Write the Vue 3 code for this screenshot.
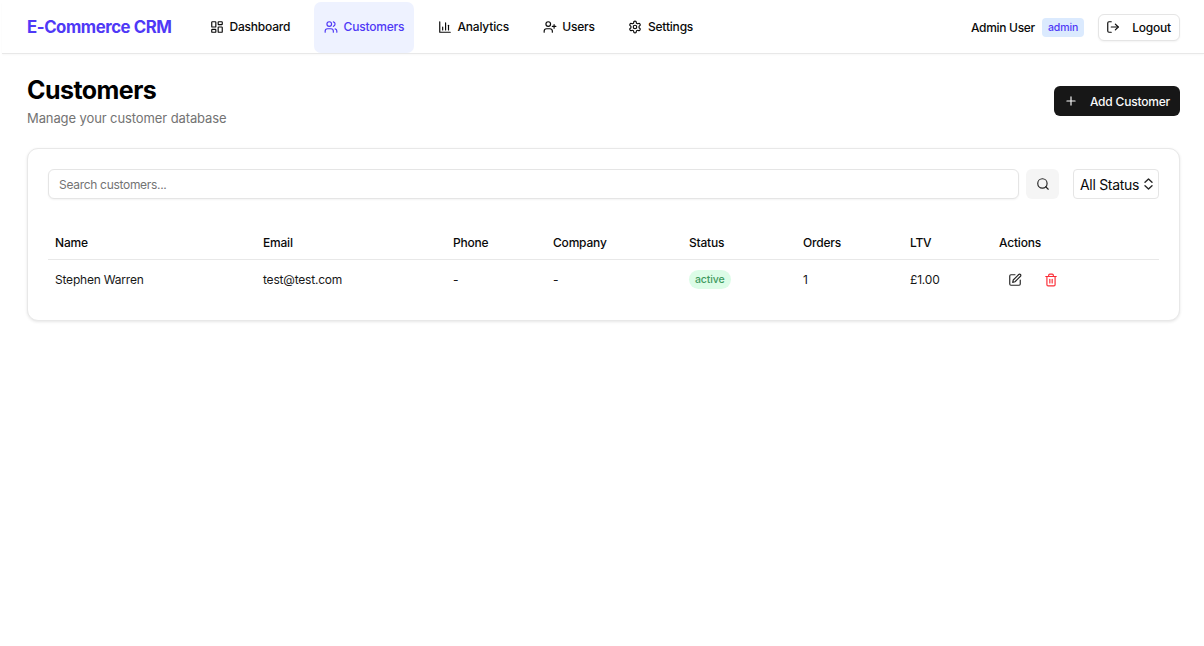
<script setup>
const columns = ['Name', 'Email', 'Phone', 'Company', 'Status', 'Orders', 'LTV', 'Actions']
</script>

<template>
  <div class="app">
    <nav class="nav">
      <div class="logo">E-Commerce CRM</div>
      <div class="links">
        <a class="link">
          <svg class="ic" viewBox="0 0 24 24"><rect x="3" y="3" width="7" height="9" rx="1"/><rect x="14" y="3" width="7" height="5" rx="1"/><rect x="14" y="12" width="7" height="9" rx="1"/><rect x="3" y="16" width="7" height="5" rx="1"/></svg>
          Dashboard
        </a>
        <a class="link active">
          <svg class="ic" viewBox="0 0 24 24"><path d="M16 21v-2a4 4 0 0 0-4-4H6a4 4 0 0 0-4 4v2"/><circle cx="9" cy="7" r="4"/><path d="M22 21v-2a4 4 0 0 0-3-3.87"/><path d="M16 3.13a4 4 0 0 1 0 7.75"/></svg>
          Customers
        </a>
        <a class="link">
          <svg class="ic" viewBox="0 0 24 24"><path d="M3 3v18h18"/><path d="M8 17v-5"/><path d="M13 17V5"/><path d="M18 17V9"/></svg>
          Analytics
        </a>
        <a class="link">
          <svg class="ic" viewBox="0 0 24 24"><path d="M16 21v-2a4 4 0 0 0-4-4H6a4 4 0 0 0-4 4v2"/><circle cx="9" cy="7" r="4"/><path d="M19 8v6"/><path d="M22 11h-6"/></svg>
          Users
        </a>
        <a class="link">
          <svg class="ic" viewBox="0 0 24 24"><path d="M12.22 2h-.44a2 2 0 0 0-2 2v.18a2 2 0 0 1-1 1.73l-.43.25a2 2 0 0 1-2 0l-.15-.08a2 2 0 0 0-2.73.73l-.22.38a2 2 0 0 0 .73 2.73l.15.1a2 2 0 0 1 1 1.72v.51a2 2 0 0 1-1 1.74l-.15.09a2 2 0 0 0-.73 2.73l.22.38a2 2 0 0 0 2.73.73l.15-.08a2 2 0 0 1 2 0l.43.25a2 2 0 0 1 1 1.73V20a2 2 0 0 0 2 2h.44a2 2 0 0 0 2-2v-.18a2 2 0 0 1 1-1.73l.43-.25a2 2 0 0 1 2 0l.15.08a2 2 0 0 0 2.73-.73l.22-.39a2 2 0 0 0-.73-2.73l-.15-.08a2 2 0 0 1-1-1.74v-.5a2 2 0 0 1 1-1.74l.15-.09a2 2 0 0 0 .73-2.73l-.22-.38a2 2 0 0 0-2.73-.73l-.15.08a2 2 0 0 1-2 0l-.43-.25a2 2 0 0 1-1-1.73V4a2 2 0 0 0-2-2z"/><circle cx="12" cy="12" r="3"/></svg>
          Settings
        </a>
      </div>
      <div class="user">
        <span class="uname">Admin User</span>
        <span class="role">admin</span>
        <button class="logout">
          <svg class="ic" viewBox="0 0 24 24"><path d="M9 21H5a2 2 0 0 1-2-2V5a2 2 0 0 1 2-2h4"/><path d="m16 17 5-5-5-5"/><path d="M21 12H9"/></svg>
          Logout
        </button>
      </div>
    </nav>

    <main class="main">
      <header class="head">
        <div>
          <h1>Customers</h1>
          <p>Manage your customer database</p>
        </div>
        <button class="add">
          <svg class="ic" viewBox="0 0 24 24"><path d="M5 12h14"/><path d="M12 5v14"/></svg>
          Add Customer
        </button>
      </header>

      <section class="card">
        <div class="filters">
          <input class="search" type="text" placeholder="Search customers..." />
          <button class="sbtn">
            <svg class="ic" viewBox="0 0 24 24"><circle cx="11" cy="11" r="8"/><path d="m21 21-4.3-4.3"/></svg>
          </button>
          <div class="select">
            All Status
            <svg class="chev" viewBox="0 0 9 12"><path d="M1 4.2 4.5 1 8 4.2"/><path d="M1 7.8 4.5 11 8 7.8"/></svg>
          </div>
        </div>

        <table>
          <thead>
            <tr><th v-for="c in columns" :key="c" :class="'c-' + c.toLowerCase()">{{ c }}</th></tr>
          </thead>
          <tbody>
            <tr>
              <td>Stephen Warren</td>
              <td>test@test.com</td>
              <td>-</td>
              <td>-</td>
              <td><span class="badge">active</span></td>
              <td>1</td>
              <td>£1.00</td>
              <td>
                <div class="actions">
                  <svg class="ic edit" viewBox="0 0 24 24"><path d="M12 3H5a2 2 0 0 0-2 2v14a2 2 0 0 0 2 2h14a2 2 0 0 0 2-2v-7"/><path d="M18.375 2.625a2.121 2.121 0 1 1 3 3L12 15l-4 1 1-4Z"/></svg>
                  <svg class="ic trash" viewBox="0 0 24 24"><path d="M3 6h18"/><path d="M19 6v14a2 2 0 0 1-2 2H7a2 2 0 0 1-2-2V6"/><path d="M8 6V4a2 2 0 0 1 2-2h4a2 2 0 0 1 2 2v2"/><path d="M10 11v6"/><path d="M14 11v6"/></svg>
                </div>
              </td>
            </tr>
          </tbody>
        </table>
      </section>
    </main>
  </div>
</template>

<style>
html, body { margin: 0; background: #fff; }
</style>

<style scoped>
.app {
  width: 1204px;
  height: 646px;
  box-sizing: border-box;
  padding: 2px 0 0 2px;
  font-family: Inter, "Liberation Sans", sans-serif;
  font-size: 12px;
  letter-spacing: -0.2px;
  color: #0a0a0a;
  background: #fff;
  overflow: hidden;
}
.ic {
  width: 14px;
  height: 14px;
  flex: none;
  fill: none;
  stroke: currentColor;
  stroke-width: 2;
  stroke-linecap: round;
  stroke-linejoin: round;
}
.nav {
  display: flex;
  align-items: center;
  height: 51px;
  padding: 0 24px 0 25px;
  border-bottom: 1px solid #e8e8e8;
  box-shadow: 0 1px 2px rgba(0, 0, 0, 0.03);
}
.logo {
  width: 145px;
  margin-bottom: 2px;
  font-size: 16.8px;
  font-weight: 700;
  letter-spacing: -0.45px;
  color: #4f39f6;
  white-space: nowrap;
}
.links {
  display: flex;
  align-self: stretch;
  margin-left: 28px;
  gap: 13.75px;
}
.link {
  display: flex;
  align-items: center;
  gap: 5.5px;
  padding: 0 10px 2px;
  font-weight: 500;
  white-space: nowrap;
  border-radius: 7px;
}
.link.active {
  background: #eef2ff;
  color: #4f39f6;
}
.user {
  display: flex;
  align-items: center;
  margin-left: auto;
  margin-bottom: 1px;
}
.uname {
  font-weight: 500;
  letter-spacing: -0.3px;
}
.role {
  margin-left: 7px;
  padding: 3px 6px;
  border-radius: 4px;
  background: #dbeafe;
  color: #4f39f6;
  font-size: 10.5px;
  letter-spacing: -0.1px;
  font-weight: 500;
  line-height: 13px;
}
.logout {
  display: flex;
  align-items: center;
  gap: 12px;
  box-sizing: border-box;
  height: 27px;
  margin-left: 14px;
  padding: 0 8px 0 7px;
  background: #fff;
  border: 1px solid #e5e5e5;
  border-radius: 6px;
  box-shadow: 0 1px 2px rgba(0, 0, 0, 0.05);
  font: 500 12px Inter, "Liberation Sans", sans-serif;
  letter-spacing: -0.2px;
  color: #0a0a0a;
}
.main {
  padding: 20px 24px 0 25px;
}
.head {
  display: flex;
  align-items: center;
  justify-content: space-between;
}
h1 {
  margin: 0;
  font-size: 25px;
  line-height: 32px;
  font-weight: 700;
  letter-spacing: -0.55px;
  color: #000;
}
p {
  margin: 2px 0 0;
  font-size: 13px;
  line-height: 20px;
  letter-spacing: -0.1px;
  color: #737373;
}
.add {
  display: flex;
  align-items: center;
  gap: 12px;
  box-sizing: border-box;
  height: 30px;
  padding: 0 10px;
  background: #171717;
  border: 0;
  border-radius: 6px;
  color: #fafafa;
  font: 500 12px Inter, "Liberation Sans", sans-serif;
  letter-spacing: -0.2px;
}
.card {
  margin-top: 20px;
  padding: 20px;
  background: #fff;
  border: 1px solid #e8e8e8;
  border-radius: 11px;
  box-shadow: 0 1px 3px rgba(0, 0, 0, 0.1);
}
.filters {
  display: flex;
  align-items: stretch;
  height: 30px;
}
.search {
  flex: 1;
  min-width: 0;
  box-sizing: border-box;
  padding: 0 10px;
  border: 1px solid #e5e5e5;
  border-radius: 6px;
  outline: 0;
  font: 400 12px Inter, "Liberation Sans", sans-serif;
  letter-spacing: -0.3px;
  box-shadow: 0 1px 2px rgba(0, 0, 0, 0.05);
}
.search::placeholder { color: #737373; opacity: 1; }
.sbtn {
  display: flex;
  align-items: center;
  justify-content: center;
  width: 33px;
  margin-left: 7px;
  padding: 0;
  background: #f5f5f5;
  border: 0;
  border-radius: 6px;
  color: #262626;
}
.select {
  display: flex;
  align-items: center;
  justify-content: space-between;
  box-sizing: border-box;
  width: 86px;
  margin-left: 14px;
  padding: 0 5px 0 6px;
  border: 1px solid #e5e5e5;
  border-radius: 4px;
  font-size: 14px;
  letter-spacing: -0.3px;
  white-space: nowrap;
}
.chev {
  width: 9px;
  height: 12px;
  fill: none;
  stroke: #262626;
  stroke-width: 1.4;
  stroke-linecap: round;
  stroke-linejoin: round;
}
table {
  width: 100%;
  margin-top: 26px;
  table-layout: fixed;
  border-collapse: collapse;
}
th {
  box-sizing: border-box;
  height: 34px;
  padding: 2px 7px 0;
  text-align: left;
  font-weight: 500;
  color: #0a0a0a;
  border-bottom: 1px solid #e8e8e8;
}
td {
  box-sizing: border-box;
  height: 41px;
  padding: 0 7px;
  color: #171717;
}
.c-name { width: 208px; }
.c-email { width: 190px; }
.c-phone { width: 100px; }
.c-company { width: 136px; }
.c-status { width: 114px; }
.c-orders { width: 107px; }
.c-ltv { width: 89px; }
.badge {
  display: inline-block;
  vertical-align: -1px;
  padding: 3px 6px;
  border-radius: 10px;
  background: #dcfce7;
  color: #3f9a5e;
  font-size: 10.5px;
  letter-spacing: -0.1px;
  font-weight: 500;
  line-height: 13px;
}
.actions {
  display: flex;
  align-items: center;
  gap: 22px;
  padding-left: 9px;
}
.edit { color: #262626; }
.trash { color: #fb2c36; }
</style>
